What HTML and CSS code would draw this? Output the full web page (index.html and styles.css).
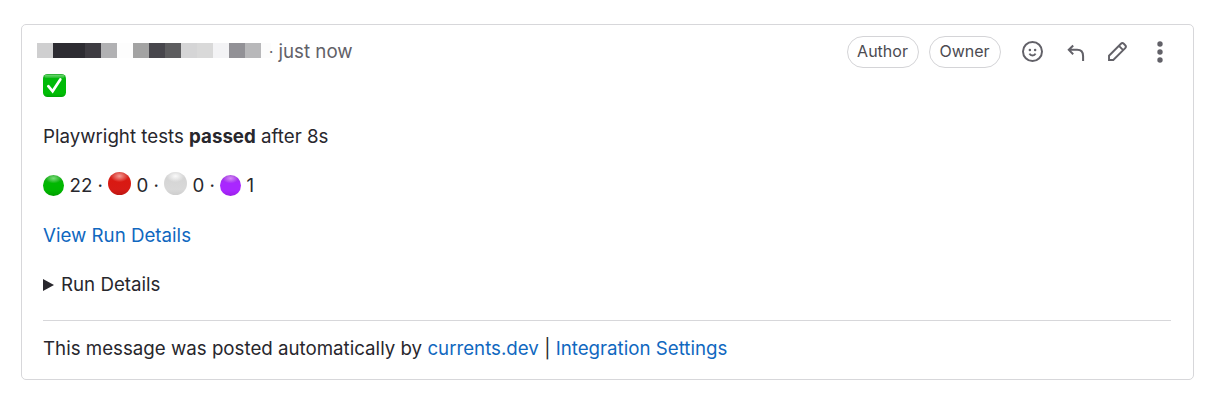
FILE: index.html
```html
<!DOCTYPE html>
<html lang="en">
<head>
<meta charset="utf-8">
<title>Comment</title>
<link rel="stylesheet" href="styles.css">
</head>
<body>
<article class="note">
  <header class="note-header">
    <svg class="redacted" width="234" height="15" viewBox="0 0 234 15" shape-rendering="crispEdges">
      <path fill="#cfcfd0" d="M0 0h16v15H0z"/>
      <path fill="#2d2c32" d="M16 0h32v15H16z"/>
      <path fill="#3e3c42" d="M48 0h16v15H48z"/>
      <path fill="#b1b1b3" d="M64 0h16v15H64z"/>
      <path fill="#fdfdfd" d="M80 0h16v15H80z"/>
      <path fill="#a3a3a3" d="M96 0h16v15H96z"/>
      <path fill="#47464c" d="M112 0h16v15h-16z"/>
      <path fill="#5d5d5f" d="M128 0h16v15h-16z"/>
      <path fill="#d5d5d6" d="M144 0h16v15h-16z"/>
      <path fill="#d9d9d9" d="M160 0h16v15h-16z"/>
      <path fill="#f3f3f5" d="M176 0h16v15h-16z"/>
      <path fill="#929196" d="M192 0h16v15h-16z"/>
      <path fill="#b8b8ba" d="M208 0h16v15h-16z"/>
      <path fill="#fcfcfc" d="M224 0h10v15h-10z"/>
    </svg>
    <span class="dot">·</span>
    <span class="time">just now</span>
    <div class="actions">
      <span class="badge">Author</span>
      <span class="badge">Owner</span>
      <svg class="icon icon-smile" viewBox="0 0 16 16"><circle cx="8" cy="8" r="7.25"/><path d="M5.7 9.6c.9 1.9 3.7 1.9 4.6 0"/><circle class="solid" cx="6" cy="6.8" r=".95"/><circle class="solid" cx="10" cy="6.8" r=".95"/></svg>
      <svg class="icon icon-reply" viewBox="0 0 16 16"><path d="M5.500 1.300 1.600 5.200 5.500 9.100M1.800 5.200H9c3.500 0 5.300 2.100 5.300 5.600V15"/></svg>
      <svg class="icon icon-edit" viewBox="0 0 16 16"><path d="M.85 15.150v-3.600L10.900 1.500a1.700 1.700 0 0 1 2.400 0l1.200 1.200a1.700 1.700 0 0 1 0 2.400L4.450 15.150H.85zM9.200 3.200l3.600 3.600"/></svg>
      <svg class="icon icon-more" viewBox="0 0 6 22"><circle class="solid" cx="3" cy="3" r="2.700"/><circle class="solid" cx="3" cy="11" r="2.700"/><circle class="solid" cx="3" cy="19" r="2.700"/></svg>
    </div>
  </header>
  <div class="note-body">
    <div class="status">
      <svg width="23" height="23" viewBox="0 0 23 23">
        <defs>
          <linearGradient id="box" x2="0" y2="1"><stop stop-color="#1fa527"/><stop offset=".2" stop-color="#00b90a"/><stop offset=".85" stop-color="#00bd05"/><stop offset="1" stop-color="#00a407"/></linearGradient>
          <linearGradient id="shine" x2="0" y2="1"><stop stop-color="#6fd873"/><stop offset="1" stop-color="#22bd2a"/></linearGradient>
        </defs>
        <rect width="23" height="23" rx="4.500" fill="url(#box)"/>
        <rect x="1.500" y=".8" width="20" height="3.200" rx="1.600" fill="url(#shine)"/>
        <path d="M5.300 12.200 9.600 17.300 17.300 5.500" fill="none" stroke="#fff" stroke-width="2.700" stroke-linecap="round"/>
      </svg>
    </div>
    <p>Playwright tests <strong>passed</strong> after 8s</p>
    <p class="counts">
      <span class="ball green"></span><span class="count count-passed">22 ·</span>
      <span class="ball large red"></span><span class="count">0 ·</span>
      <span class="ball large white"></span><span class="count">0 ·</span>
      <span class="ball purple"></span><span class="count">1</span>
    </p>
    <p><a>View Run Details</a></p>
    <p class="summary"><svg width="11" height="12" viewBox="0 0 11 12"><path d="M0 0 11 6 0 12z" fill="#28272d"/></svg>Run Details</p>
    <p class="footer">This message was posted automatically by <a>currents.dev</a> <span class="bar">|</span> <a>Integration Settings</a></p>
  </div>
</article>
</body>
</html>
```
FILE: styles.css
```css
* { box-sizing: border-box; }
body {
  margin: 0;
  padding: 24px 20px 26px 21px;
  background: #fff;
  color: #28272d;
  font: 18.72px/28px Inter, sans-serif;
}
.note {
  height: 356px;
  border: 1px solid #d7d7da;
  border-radius: 5px;
}
.note-header {
  display: flex;
  align-items: center;
  height: 53px;
  padding: 0 30px 0 15px;
  color: #626168;
}
.redacted { flex: none; margin-top: -2px; }
.dot { width: 7px; margin-left: -2px; font-size: 15px; }
.time { margin-left: 2.5px; }
.actions { display: flex; align-items: center; margin-left: auto; }
.badge {
  height: 32px;
  width: 72px;
  margin-right: 10px;
  border: 1px solid #d4d4d7;
  border-radius: 16px;
  font-size: 16px;
  line-height: 29px;
  text-align: center;
  text-indent: -1px;
  color: #4c4b51;
}
.icon {
  fill: none;
  stroke: #626168;
  stroke-width: 1.5;
  overflow: visible;
}
.solid { fill: #626168; stroke: none; }
.icon-smile { width: 21px; height: 21px; margin-left: 11px; }
.icon-reply { width: 18px; height: 18px; margin: 3px 0 0 24px; stroke-width: 1.8; }
.icon-edit { width: 19px; height: 19px; margin-left: 23px; stroke-width: 1.6; }
.icon-more { width: 6px; height: 22px; margin-left: 30px; }
.note-body { padding: 0 22px 0 21px; }
.status { height: 47px; margin-top: -4px; }
.status svg { display: block; }
p { height: 28px; margin: 0 0 21.4px; white-space: pre; }
.status + p { margin-top: 2px; }
a { color: #1068bf; }
.counts { display: flex; align-items: center; white-space: normal; }
.ball {
  flex: none;
  width: 21px;
  height: 21px;
  margin: -2px 6px 0 0;
  border-radius: 50%;
}
.large { width: 23px; height: 23px; margin: -6px 6px 0 0; }
.count { width: 27px; text-indent: -0.5px; }
.count-passed { width: 38px; }
.green { background: radial-gradient(ellipse 8px 5px at 50% 16%, #78dd78, transparent), linear-gradient(#20a522, #00b800 40%, #00b500 75%, #009d00); }
.red { background: radial-gradient(ellipse 9px 6px at 50% 18%, #f69b94, transparent), linear-gradient(#cf2921, #d91912 40%, #d71b16 75%, #bd1712); }
.white { background: radial-gradient(ellipse 9px 6px at 50% 18%, #fafafa, transparent), linear-gradient(#d2d2d2, #d9d9d9 75%, #cecece); }
.purple { background: radial-gradient(ellipse 8px 5px at 50% 16%, #d58af7, transparent), linear-gradient(#9b35d8, #a927ff 40%, #a927ff 75%, #9b20e6); }
.summary { display: flex; align-items: center; gap: 7px; margin-bottom: 20.4px; }
.footer {
  height: auto;
  margin: 0;
  padding-top: 14px;
  border-top: 1px solid #d7d7da;
}
```
